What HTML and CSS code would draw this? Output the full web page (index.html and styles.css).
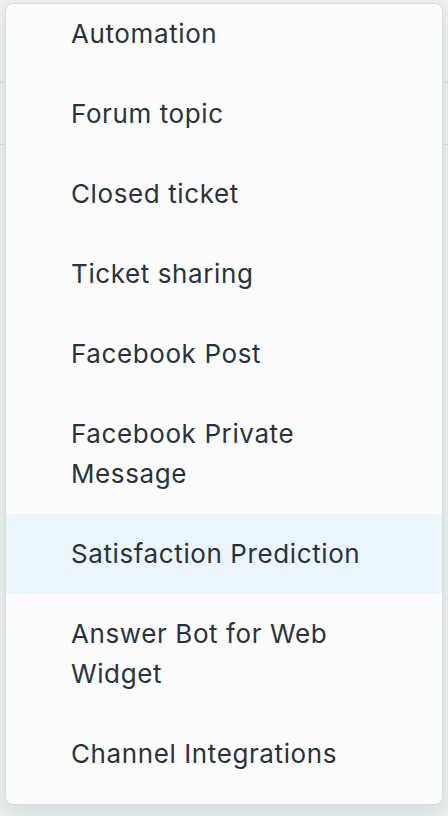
FILE: index.html
```html
<!DOCTYPE html>
<html lang="en">
<head>
<meta charset="utf-8">
<title>Menu</title>
<link rel="stylesheet" href="styles.css">
</head>
<body>
<div class="backdrop">
  <div class="bg-line bg-line-1"></div>
  <div class="bg-line bg-line-2"></div>
</div>
<ul class="menu">
  <li class="item first">Automation</li>
  <li class="item">Forum topic</li>
  <li class="item">Closed ticket</li>
  <li class="item">Ticket sharing</li>
  <li class="item">Facebook Post</li>
  <li class="item">Facebook Private<br>Message</li>
  <li class="item active">Satisfaction Prediction</li>
  <li class="item">Answer Bot for Web<br>Widget</li>
  <li class="item">Channel Integrations</li>
</ul>
</body>
</html>
```
FILE: styles.css
```css
html, body {
  margin: 0;
  padding: 0;
}
body {
  width: 448px;
  height: 816px;
  overflow: hidden;
  background: #edf0f0;
  font-family: Inter, "Noto Sans", sans-serif;
  position: relative;
}
.backdrop {
  position: absolute;
  inset: 0;
}
.bg-line {
  position: absolute;
  left: 0;
  width: 448px;
  height: 1px;
  background: #d8dcde;
}
.bg-line-1 { top: 82px; }
.bg-line-2 { top: 144px; }
.menu {
  position: absolute;
  top: 3px;
  left: 5px;
  width: 436px;
  margin: 0;
  padding: 0 0 10px 0;
  list-style: none;
  background: #fcfcfc;
  border: 1px solid #d8dcde;
  border-radius: 8px;
  box-shadow: 0 8px 20px rgba(4, 68, 77, 0.12);
  overflow: hidden;
}
.item {
  padding: 20px 20px 20px 65px;
  font-size: 26px;
  line-height: 40px;
  letter-spacing: 0.6px;
  color: #2a333b;
}
.item.first {
  padding-top: 10px;
}
.item.active {
  background: #eaf5fe;
}
```
